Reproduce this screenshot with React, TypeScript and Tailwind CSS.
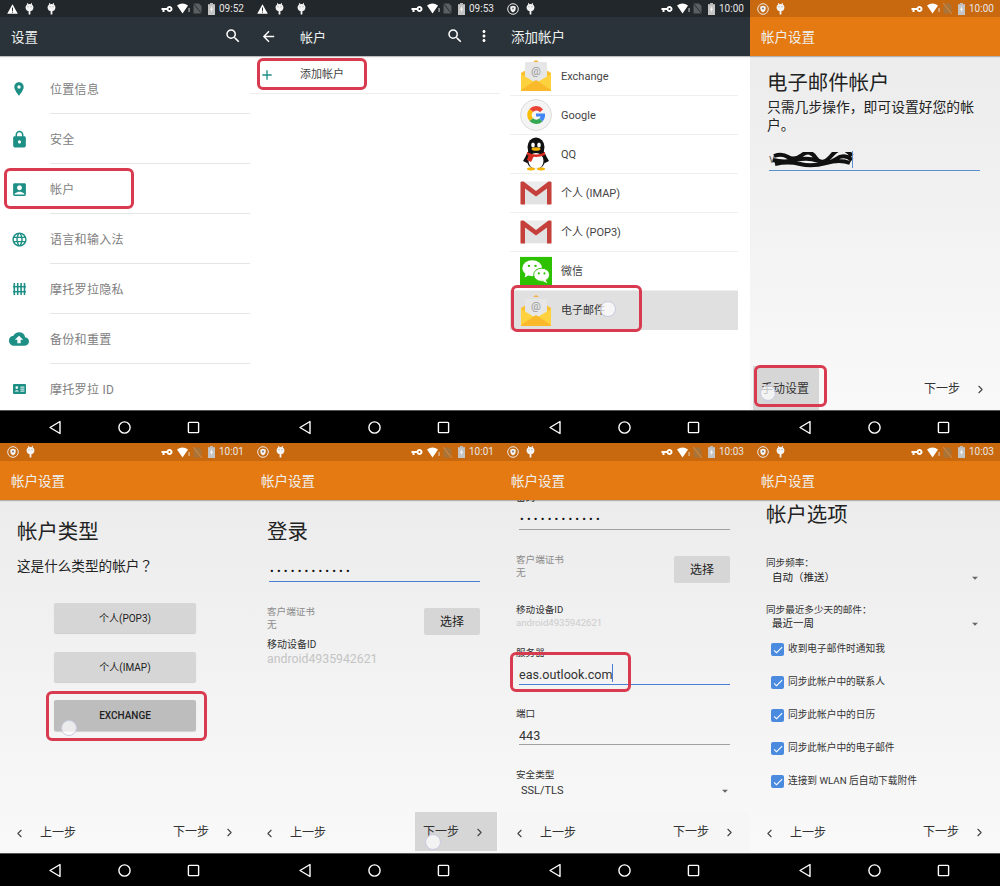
import type { ReactNode } from 'react';
import { ChevronLeft, ChevronRight } from 'lucide-react';
import {
  MdSearch, MdArrowBack, MdMoreVert, MdLocationOn, MdLock, MdAccountBox, MdLanguage,
  MdCloudUpload, MdVpnKey, MdArrowDropDown, MdCheck, MdAdd,
} from 'react-icons/md';

const FONT = "font-['Roboto','Noto_Sans_CJK_SC',sans-serif]";

/* ---------- status bar bits ---------- */

function Alert() {
  return (
    <svg width="11" height="10" viewBox="0 0 11 10"><path d="M5.5 0.3 L10.8 9.7 H0.2 Z" fill="#fff" /><rect x="5" y="3.5" width="1" height="3.4" fill="#2a2f33" /><rect x="5" y="7.6" width="1" height="1" fill="#2a2f33" /></svg>
  );
}

function Droid() {
  return (
    <svg width="9" height="12" viewBox="0 0 9 12"><ellipse cx="4.5" cy="4.6" rx="3.9" ry="3.6" fill="#f4f4f4" /><rect x="3.6" y="7" width="1.8" height="4.6" rx="0.6" fill="#f4f4f4" /><rect x="2.2" y="0" width="0.9" height="2" fill="#f4f4f4" /><rect x="5.9" y="0" width="0.9" height="2" fill="#f4f4f4" /><circle cx="3" cy="3.8" r="0.5" fill="#777" /><circle cx="6" cy="3.8" r="0.5" fill="#777" /></svg>
  );
}

function ShieldBadge() {
  return (
    <svg width="12" height="12" viewBox="0 0 12 12"><circle cx="6" cy="6" r="5.3" fill="none" stroke="#e8e8e8" strokeWidth="1" /><path d="M3.3 3.6 L6 2.8 L8.7 3.6 V6 Q8.7 8.2 6 9.4 Q3.3 8.2 3.3 6 Z" fill="#f4f4f4" /><circle cx="6" cy="5.5" r="1" fill="#777" /></svg>
  );
}

function StatusRight({ time, dim }: { time: string; dim?: boolean }) {
  return (
    <div className="flex items-center">
      <MdVpnKey className="w-[12px] h-[12px] text-white -scale-x-100" />
      <svg className="ml-[4px]" width="13" height="11" viewBox="0 0 13 11"><path d="M0 2.6 Q5.5 -1.4 11 2.6 L5.5 10.5 Z" fill="#fff" /><rect x="11.6" y="5" width="0.9" height="4" fill="#ddd" /></svg>
      <svg className="ml-[3px]" width="9" height="11" viewBox="0 0 9 11"><path d="M0.5 0.5 H6 L8.5 3 V10.5 H0.5 Z" fill={dim ? '#a8743a' : '#5a5f62'} /><path d="M0 0 L9 11" stroke={dim ? '#e08a3a' : '#2a2f33'} strokeWidth="1" /></svg>
      <svg className="ml-[6px]" width="7" height="12" viewBox="0 0 7 12"><rect x="2" y="0" width="3" height="1.5" fill="#bbb" /><rect x="0" y="1.2" width="7" height="10.8" fill="#c4c4c4" /><path d="M4 3 L2 6.8 H3.4 L3 9.6 L5 5.8 H3.6 Z" fill="#fff" /></svg>
      <span className="ml-[4px] w-[26px] text-[10px] leading-none text-[#e6e6e6]">{time}</span>
    </div>
  );
}

function StatusBar({ left, time, bg, tall, dim }: { left: ReactNode; time: string; bg: string; tall?: boolean; dim?: boolean }) {
  return (
    <div className={`${tall ? 'h-[18px]' : 'h-[17px]'} ${bg} shrink-0 flex items-center justify-between pl-[7px] pr-[5px]`}>
      <div className="flex items-center gap-[7px]">{left}</div>
      <StatusRight time={time} dim={dim} />
    </div>
  );
}

function NavBar() {
  return (
    <div className="h-[33px] shrink-0 bg-black border-t border-[#555] flex items-start pl-[48px] pt-[9px]">
      <svg width="15" height="15" viewBox="0 0 15 15"><path d="M12 1.5 V13.5 L2 7.5 Z" fill="none" stroke="#fff" strokeWidth="1.4" strokeLinejoin="round" /></svg>
      <svg className="ml-[54px]" width="15" height="15" viewBox="0 0 15 15"><circle cx="7.5" cy="7.5" r="5.6" fill="none" stroke="#fff" strokeWidth="1.4" /></svg>
      <svg className="ml-[54px]" width="15" height="15" viewBox="0 0 15 15"><rect x="2.4" y="2.4" width="10.2" height="10.2" rx="0.8" fill="none" stroke="#fff" strokeWidth="1.4" /></svg>
    </div>
  );
}

/* ---------- overlays ---------- */

function RedBox({ className }: { className: string }) {
  return <div className={`absolute border-[3px] border-[#d83a50] rounded-[6px] pointer-events-none ${className}`} />;
}

function Touch({ className }: { className: string }) {
  return <div className={`absolute w-[16px] h-[16px] rounded-full bg-white/70 border border-[#c9cbe2] ${className}`} />;
}

/* ---------- app icons for the account list ---------- */

function MailIcon({ open }: { open?: boolean }) {
  return (
    <svg width="32" height="32" viewBox="0 0 32 32">
      <path d="M16 0 L19 2 H13 Z" fill="#f2b13a" />
      <path d="M1 13 L16 4 L31 13 V30 Q31 31 30 31 H2 Q1 31 1 30 Z" fill="#fbc02d" />
      <rect x="5" y={open ? 4 : 2} width="22" height="20" rx="1" fill="#e6e6e6" />
      <text x="16" y="15" textAnchor="middle" fontSize="11" fill="#9a9a9a">@</text>
      <path d="M1 14 L16 23 L31 14 V30 Q31 31 30 31 H2 Q1 31 1 30 Z" fill="#fdd23e" />
      <path d="M1 30 L16 20 L31 30 V30.5 Q31 31 30 31 H2 Q1 31 1 30.5 Z" fill="#f9b92a" />
    </svg>
  );
}

function GoogleIcon() {
  return (
    <svg width="32" height="32" viewBox="0 0 32 32">
      <circle cx="16" cy="16" r="15.5" fill="#f4f4f4" stroke="#dcdcdc" />
      <path d="M23 10.2 A9 9 0 0 0 9.5 10 L13 13 A4.6 4.6 0 0 1 20 13.2 Z" fill="#ea4335" />
      <path d="M9.5 10 A9 9 0 0 0 9.5 22 L13 19.2 A4.6 4.6 0 0 1 13 13 Z" fill="#fbbc05" />
      <path d="M9.5 22 A9 9 0 0 0 22.5 22.4 L19.4 19.6 A4.6 4.6 0 0 1 13 19.2 Z" fill="#34a853" />
      <path d="M16 14.4 H25 Q25.5 19 22.5 22.4 L19.4 19.6 Q20.4 18.6 20.6 17.6 H16 Z" fill="#4285f4" />
    </svg>
  );
}

function QQIcon() {
  return (
    <svg width="32" height="34" viewBox="0 0 32 34">
      <ellipse cx="16" cy="21" rx="10" ry="11" fill="#111" />
      <ellipse cx="16" cy="10" rx="8.5" ry="9.5" fill="#111" />
      <ellipse cx="16" cy="24" rx="7.5" ry="8" fill="#fff" />
      <ellipse cx="13" cy="8" rx="1.8" ry="2.6" fill="#fff" />
      <ellipse cx="19" cy="8" rx="1.8" ry="2.6" fill="#fff" />
      <ellipse cx="16" cy="12" rx="4.5" ry="1.8" fill="#f4b400" />
      <path d="M7 15 Q16 20 25 15 L25 18 Q16 22 7 18 Z" fill="#d92c20" />
      <path d="M9 17 L14 19 L11 25 L7 23 Z" fill="#d92c20" />
      <path d="M3 24 L7 17 L7 26 Z M29 24 L25 17 L25 26 Z" fill="#111" />
      <ellipse cx="11" cy="32" rx="4" ry="1.4" fill="#f4b400" />
      <ellipse cx="21" cy="32" rx="4" ry="1.4" fill="#f4b400" />
    </svg>
  );
}

function GmailIcon() {
  return (
    <svg width="32" height="24" viewBox="0 0 32 24">
      <rect x="0.5" y="0.5" width="31" height="23" rx="1" fill="#ececec" />
      <path d="M4 23 V6 L16 15 L28 6 V23 Z" fill="#e2e2e2" />
      <path d="M0.5 1.5 Q0.5 0.5 2 0.5 H3.5 L16 10 L28.5 0.5 H30 Q31.5 0.5 31.5 1.5 V23 Q31.5 23.5 30.5 23.5 H27 V7.5 L16 15.5 L5 7.5 V23.5 H1.5 Q0.5 23.5 0.5 23 Z" fill="#c5403a" />
    </svg>
  );
}

function WechatIcon() {
  return (
    <svg width="34" height="31" viewBox="0 0 34 31">
      <rect width="34" height="31" fill="#2dc100" />
      <ellipse cx="13" cy="12" rx="10.5" ry="8.5" fill="#fff" />
      <path d="M6 17 L5 22 L10 19 Z" fill="#fff" />
      <ellipse cx="23" cy="19" rx="8.5" ry="7" stroke="#2dc100" strokeWidth="1" fill="#fff" />
      <path d="M27 24 L29 28 L24 25.5 Z" fill="#fff" />
      <circle cx="9.5" cy="9.5" r="1.3" fill="#2dc100" /><circle cx="16.5" cy="9.5" r="1.3" fill="#2dc100" />
      <circle cx="20" cy="17.5" r="1.1" fill="#2dc100" /><circle cx="26" cy="17.5" r="1.1" fill="#2dc100" />
    </svg>
  );
}

/* ---------- panels ---------- */

function Toolbar({ bg, title, children }: { bg: string; title?: string; children?: ReactNode }) {
  return (
    <div className={`h-[39px] shrink-0 ${bg} shadow-[0_1px_1px_rgba(0,0,0,0.25)] relative z-10 flex items-center`}>
      {title && <span className="pl-[11px] pt-[2px] text-[13.5px] text-[#eef0f0]">{title}</span>}
      {children}
    </div>
  );
}

const settingsRows = [
  { label: '位置信息', icon: <MdLocationOn className="w-[16px] h-[16px]" /> },
  { label: '安全', icon: <MdLock className="w-[19px] h-[19px]" /> },
  { label: '帐户', icon: <MdAccountBox className="w-[17px] h-[17px]" /> },
  { label: '语言和输入法', icon: <MdLanguage className="w-[17px] h-[17px]" /> },
  {
    label: '摩托罗拉隐私',
    icon: (
      <svg width="13" height="12" viewBox="0 0 13 12" fill="currentColor"><rect x="0.5" y="0" width="1.6" height="12" /><rect x="3.9" y="0" width="1.6" height="12" /><rect x="7.3" y="0" width="1.6" height="12" /><rect x="10.7" y="0" width="1.6" height="12" /><rect x="0" y="3" width="13" height="1.4" /><rect x="0" y="8" width="13" height="1.4" /></svg>
    ),
  },
  { label: '备份和重置', icon: <MdCloudUpload className="w-[20px] h-[20px]" /> },
  {
    label: '摩托罗拉 ID',
    icon: (
      <svg width="13" height="10" viewBox="0 0 13 10"><rect width="13" height="10" rx="1" fill="currentColor" /><circle cx="3.8" cy="3.6" r="1.3" fill="#fff" /><path d="M1.6 7.6 Q3.8 5 6 7.6 Z" fill="#fff" /><rect x="7.4" y="2.6" width="4" height="1" fill="#fff" /><rect x="7.4" y="4.6" width="4" height="1" fill="#fff" /><rect x="7.4" y="6.6" width="4" height="1" fill="#fff" /></svg>
    ),
  },
];

function SettingsPanel() {
  return (
    <Phone>
      <StatusBar bg="bg-[#22272b]" time="09:52" left={<><Alert /><Droid /><span className="ml-[6px]"><Droid /></span></>} />
      <Toolbar bg="bg-[#2a3339]" title="设置">
        <MdSearch className="absolute left-[224px] top-[10px] w-[18px] h-[18px] text-white" />
      </Toolbar>
      <div className="flex-1 bg-white pt-[8px] overflow-hidden">
        {settingsRows.map((r, i) => (
          <div key={r.label} className="h-[50px] flex items-center">
            <div className="w-[38px] mr-[12px] flex justify-center text-[#1d8f85]">{r.icon}</div>
            <div className={`flex-1 h-full flex items-center pt-[2px] text-[12px] tracking-[0.3px] text-[#808080] ${i < 6 ? 'border-b border-[#e6e6e6]' : ''}`}>
              {r.label}
            </div>
          </div>
        ))}
      </div>
      <NavBar />
      <RedBox className="left-[4px] top-[168px] w-[130px] h-[41px]" />
    </Phone>
  );
}

function AccountsPanel() {
  return (
    <Phone>
      <StatusBar bg="bg-[#22272b]" time="09:53" left={<><Alert /><Droid /><span className="ml-[6px]"><Droid /></span></>} />
      <Toolbar bg="bg-[#2a3339]">
        <MdArrowBack className="absolute left-[10px] top-[11px] w-[17px] h-[17px] text-white" />
        <span className="pl-[50px] pt-[2px] text-[13px] text-[#eef0f0]">帐户</span>
        <MdSearch className="absolute left-[196px] top-[10px] w-[18px] h-[18px] text-white" />
        <MdMoreVert className="absolute left-[225px] top-[10px] w-[18px] h-[18px] text-white" />
      </Toolbar>
      <div className="flex-1 bg-white overflow-hidden">
        <div className="h-[38px] flex items-center border-b border-[#eeeeee]">
          <MdAdd className="ml-[9px] w-[16px] h-[16px] text-[#1d8f85]" />
          <span className="ml-[25px] pt-[2px] text-[11px] text-[#444]">添加帐户</span>
        </div>
      </div>
      <NavBar />
      <RedBox className="left-[7px] top-[58px] w-[110px] h-[32px]" />
    </Phone>
  );
}

const accountTypes = [
  { label: 'Exchange', icon: <MailIcon /> },
  { label: 'Google', icon: <GoogleIcon /> },
  { label: 'QQ', icon: <QQIcon /> },
  { label: '个人 (IMAP)', icon: <GmailIcon /> },
  { label: '个人 (POP3)', icon: <GmailIcon /> },
  { label: '微信', icon: <WechatIcon /> },
];

function AddAccountPanel() {
  return (
    <Phone>
      <StatusBar bg="bg-[#22272b]" time="10:00" left={<><ShieldBadge /><Droid /></>} />
      <Toolbar bg="bg-[#2a3339]" title="添加帐户" />
      <div className="flex-1 bg-white pt-px pl-[10px] pr-[12px] overflow-hidden">
        {accountTypes.map((a) => (
          <div key={a.label} className="h-[39px] flex items-center border-b border-[#eeeeee]">
            <div className="w-[32px] ml-[10px] mr-[9px] flex justify-center">{a.icon}</div>
            <span className="pt-[2px] text-[11px] text-[#444]">{a.label}</span>
          </div>
        ))}
        <div className="h-[39px] flex items-center bg-[#e0e0e0]">
          <div className="w-[32px] ml-[10px] mr-[9px] flex justify-center"><MailIcon open /></div>
          <span className="pt-[2px] text-[11px] text-[#333]">电子邮件</span>
        </div>
      </div>
      <NavBar />
      <RedBox className="left-[11px] top-[285px] w-[131px] h-[47px]" />
      <Touch className="left-[100px] top-[301px]" />
    </Phone>
  );
}

function WizardFooter({ pressed }: { pressed?: boolean }) {
  return (
    <div className="h-[41px] shrink-0 flex items-stretch justify-between relative text-[12px] text-[#333]">
      <div className="flex items-center pt-px">
        <ChevronLeft size={13} strokeWidth={2} className="ml-[13px] text-[#444]" />
        <span className="ml-[14px]">上一步</span>
      </div>
      <div className={`flex items-center pt-px pl-[8px] w-[82px] mr-[3px] mb-[2px] ${pressed ? 'bg-[#d6d6d6]' : ''}`}>
        <span>下一步</span>
        <ChevronRight size={13} strokeWidth={2} className="ml-[14px] text-[#444]" />
      </div>
    </div>
  );
}

function EmailPanel() {
  return (
    <Phone>
      <StatusBar bg="bg-[#c9690f]" dim time="10:00" left={<><ShieldBadge /><Droid /></>} />
      <Toolbar bg="bg-[#e67a12]" title="帐户设置" />
      <div className="flex-1 flex flex-col bg-gradient-to-b from-[#ececec] to-[#f9f9f9] overflow-hidden">
        <div className="flex-1 pl-[17px] pt-[13px]">
          <h1 className="text-[20.4px] leading-[28px] text-[#222]">电子邮件帐户</h1>
          <p className="w-[215px] mt-[1px] text-[13.8px] leading-[18px] text-[#222]">只需几步操作，即可设置好您的帐户。</p>
          <div className="relative ml-[2px] mt-[16px] w-[211px] h-[21px] border-b-[1.5px] border-[#5b8fd0] text-[12px] leading-[19px] text-[#666]">
            v
            <svg className="absolute left-[3px] top-[2px]" width="82" height="16" viewBox="0 0 82 16"><path d="M2 4 Q10 1 16 5 T30 3 T44 6 T60 3 T80 4 M1 8 Q12 11 24 8 T46 9 T64 7 T80 8 M3 12 Q16 9 28 12 T54 11 T78 11" fill="none" stroke="#111" strokeWidth="4" /></svg>
            <span className="absolute left-[83px] top-[1px] h-[17px] w-px bg-[#5b8fd0]" />
          </div>
        </div>
        <div className="h-[44px] shrink-0 flex items-center justify-between text-[12px] text-[#333]">
          <div className="ml-[3px] w-[66px] h-[44px] bg-[#d6d6d6] flex items-center pl-[8px] pt-[2px]">手动设置</div>
          <div className="flex items-center pt-[2px] mr-[13px]">
            <span>下一步</span>
            <ChevronRight size={13} strokeWidth={2} className="ml-[14px] text-[#444]" />
          </div>
        </div>
      </div>
      <NavBar />
      <RedBox className="left-[4px] top-[365px] w-[73px] h-[42px]" />
      <Touch className="left-[10px] top-[385px]" />
    </Phone>
  );
}

function TypeButton({ label, active }: { label: string; active?: boolean }) {
  return (
    <div className={`ml-[54px] w-[142px] flex items-center justify-center rounded-[2px] text-[10px] text-[#222] shadow-[0_1px_1px_rgba(0,0,0,0.15)] ${active ? 'h-[31px] mt-[18px] bg-[#bdbdbd] font-medium' : 'h-[30px] mt-[19px] bg-[#d6d6d6]'}`}>
      {label}
    </div>
  );
}

function TypePanel() {
  return (
    <Phone>
      <StatusBar tall bg="bg-[#c9690f]" dim time="10:01" left={<><ShieldBadge /><Droid /></>} />
      <Toolbar bg="bg-[#e67a12]" title="帐户设置" />
      <div className="flex-1 flex flex-col bg-gradient-to-b from-[#ececec] to-[#f9f9f9] overflow-hidden">
        <div className="flex-1 pt-[18px]">
          <h1 className="pl-[17px] text-[20.4px] leading-[28px] text-[#222]">帐户类型</h1>
          <p className="pl-[17px] mt-[9px] mb-[27px] text-[13.6px] leading-[20px] text-[#222]">这是什么类型的帐户<span className="font-['Noto_Sans_CJK_TC',sans-serif]">？</span></p>
          <TypeButton label="个人(POP3)" />
          <TypeButton label="个人(IMAP)" />
          <TypeButton label="EXCHANGE" active />
        </div>
        <WizardFooter />
      </div>
      <NavBar />
      <RedBox className="left-[46px] top-[248px] w-[161px] h-[50px]" />
      <Touch className="left-[61px] top-[277px]" />
    </Phone>
  );
}

const dots = '••••••••••••';

function CertRow({ className }: { className: string }) {
  return (
    <div className={`flex justify-between ${className}`}>
      <div className="text-[9.6px] leading-[13px] text-[#8c8c8c]">
        <div>客户端证书</div>
        <div>无</div>
      </div>
      <div className="mt-[3px] w-[56px] h-[27px] rounded-[2px] bg-[#d6d6d6] flex items-center justify-center text-[12px] text-[#222]">选择</div>
    </div>
  );
}

function LoginPanel() {
  return (
    <Phone>
      <StatusBar tall bg="bg-[#c9690f]" dim time="10:01" left={<><ShieldBadge /><Droid /></>} />
      <Toolbar bg="bg-[#e67a12]" title="帐户设置" />
      <div className="flex-1 flex flex-col bg-gradient-to-b from-[#ececec] to-[#f9f9f9] overflow-hidden">
        <div className="flex-1 pt-[18px] pl-[17px] pr-[20px]">
          <h1 className="text-[20.4px] leading-[28px] text-[#222]">登录</h1>
          <div className="ml-[2px] mt-[16px] h-[20px] border-b-[1.5px] border-[#4a7fd6] pl-[1px] text-[11px] leading-[20px] tracking-[3.2px] text-[#111]">{dots}</div>
          <CertRow className="mt-[23px]" />
          <div className="mt-[3px] text-[10px] leading-[13px] text-[#333]">移动设备ID</div>
          <div className="mt-[1px] text-[12.3px] leading-[15px] text-[#c4c4c4]">android4935942621</div>
        </div>
        <WizardFooter pressed />
      </div>
      <NavBar />
      <Touch className="left-[175px] top-[391px]" />
    </Phone>
  );
}

function FormLabel({ children, className }: { children: ReactNode; className: string }) {
  return <div className={`text-[9.6px] leading-[13px] text-[#333] ${className}`}>{children}</div>;
}

function ServerPanel() {
  return (
    <Phone>
      <StatusBar tall bg="bg-[#c9690f]" dim time="10:03" left={<><ShieldBadge /><Droid /></>} />
      <Toolbar bg="bg-[#e67a12]" title="帐户设置" />
      <div className="flex-1 flex flex-col bg-gradient-to-b from-[#ececec] to-[#f9f9f9] overflow-hidden">
        <div className="flex-1 pl-[16px] pr-[20px]">
          <FormLabel className="-mt-[9px]">密码</FormLabel>
          <div className="ml-[3px] mt-[6px] h-[20px] border-b border-[#a0a0a0] pl-[1px] text-[11px] leading-[20px] tracking-[3.2px] text-[#111]">{dots}</div>
          <CertRow className="mt-[23px]" />
          <FormLabel className="mt-[20px]">移动设备ID</FormLabel>
          <div className="text-[9.6px] leading-[13px] text-[#cccccc]">android4935942621</div>
          <FormLabel className="mt-[17px]">服务器</FormLabel>
          <div className="relative ml-[3px] mt-[5px] h-[21px] border-b-[1.5px] border-[#4a7fd6] text-[12.6px] leading-[22px] text-[#333]">
            eas.outlook.com
            <span className="absolute left-[93px] top-0 h-[18px] w-px bg-[#4a7fd6]" />
          </div>
          <FormLabel className="mt-[22px]">端口</FormLabel>
          <div className="ml-[3px] mt-[5px] h-[20px] border-b border-[#a0a0a0] text-[12.6px] leading-[22px] text-[#333]">443</div>
          <FormLabel className="mt-[23px]">安全类型</FormLabel>
          <div className="ml-[5px] flex justify-between items-center pt-[1px] text-[11px] leading-[17px] text-[#333]">
            SSL/TLS
            <MdArrowDropDown className="w-[14px] h-[14px] text-[#666] -mr-[2px]" />
          </div>
        </div>
        <div className="relative z-10 bg-[#f6f6f6]"><WizardFooter /></div>
      </div>
      <NavBar />
      <RedBox className="left-[10px] top-[209px] w-[121px] h-[40px]" />
    </Phone>
  );
}

const options = ['收到电子邮件时通知我', '同步此帐户中的联系人', '同步此帐户中的日历', '同步此帐户中的电子邮件', '连接到 WLAN 后自动下载附件'];

function OptionsPanel() {
  return (
    <Phone>
      <StatusBar tall bg="bg-[#c9690f]" dim time="10:03" left={<><ShieldBadge /><Droid /></>} />
      <Toolbar bg="bg-[#e67a12]" title="帐户设置" />
      <div className="flex-1 flex flex-col bg-gradient-to-b from-[#ececec] to-[#f9f9f9] overflow-hidden">
        <div className="flex-1 pt-[1px] pl-[16px] pr-[18px]">
          <h1 className="text-[20.4px] leading-[28px] text-[#222]">帐户选项</h1>
          <FormLabel className="mt-[27px]">同步频率：</FormLabel>
          <div className="ml-[6px] mt-[1px] flex justify-between items-center text-[10.5px] leading-[16px] text-[#222]">
            自动（推送）
            <MdArrowDropDown className="w-[14px] h-[14px] text-[#666]" />
          </div>
          <FormLabel className="mt-[17px]">同步最近多少天的邮件：</FormLabel>
          <div className="ml-[6px] flex justify-between items-center text-[10.5px] leading-[16px] text-[#222]">
            最近一周
            <MdArrowDropDown className="w-[14px] h-[14px] text-[#666]" />
          </div>
          <div className="pt-[1px]">
            {options.map((o) => (
              <div key={o} className="h-[33px] flex items-center ml-[5px]">
                <span className="w-[13px] h-[13px] rounded-[2px] bg-[#4a8be0] flex items-center justify-center">
                  <MdCheck className="w-[12px] h-[12px] text-white" />
                </span>
                <span className="ml-[4px] text-[9.7px] text-[#333]">{o}</span>
              </div>
            ))}
          </div>
        </div>
        <WizardFooter />
      </div>
      <NavBar />
    </Phone>
  );
}

function Phone({ children }: { children: ReactNode }) {
  return <div className="relative h-[443px] flex flex-col overflow-hidden">{children}</div>;
}

export default function App() {
  return (
    <div className={`${FONT} [text-spacing-trim:space-all] w-[1000px] h-[886px] bg-black grid grid-cols-4 overflow-hidden`}>
      <SettingsPanel />
      <AccountsPanel />
      <AddAccountPanel />
      <EmailPanel />
      <TypePanel />
      <LoginPanel />
      <ServerPanel />
      <OptionsPanel />
    </div>
  );
}
